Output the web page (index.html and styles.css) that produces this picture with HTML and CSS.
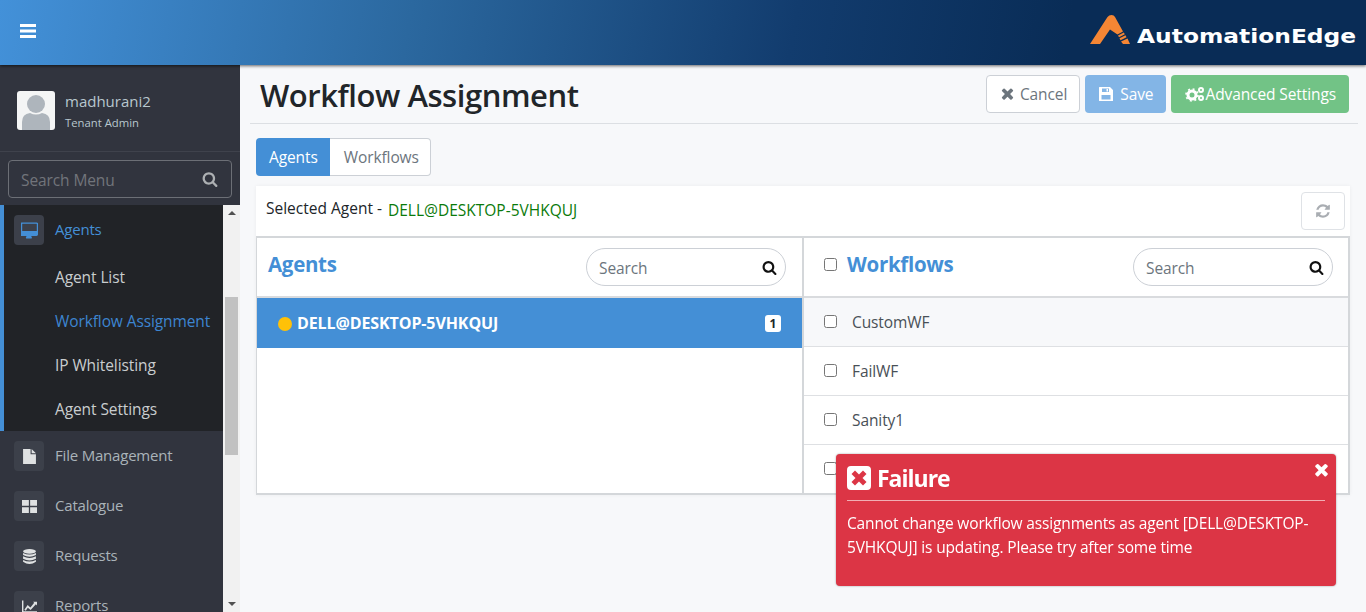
FILE: index.html
```html
<!DOCTYPE html>
<html lang="en">
<head>
  <meta charset="UTF-8" />
  <meta name="viewport" content="width=device-width, initial-scale=1.0"/>
  <title>Workflow Assignment</title>
  <link rel="stylesheet" href="styles.css">
</head>
<body>

<header class="topbar">
  <svg class="burger" viewBox="0 0 16 14"><path d="M0 0h16v3H0zM0 5.500h16v3H0zM0 11h16v3H0z"/></svg>
  <div class="brand">
    <svg class="brand-mark" viewBox="0 0 42 30"><path d="M0 30 L17.500 3 Q19 1 21.500 1 Q24 1 25 3 L33 17.500 L27.500 20.500 L20 15.500 L10 30Z M28 21.500 L33.800 18.500 L34.800 20.300 L29 23.300Z M29.500 24.300 L35.500 21.300 L36.500 23.300 L30.500 26.300Z M31 27.500 L37.500 24.500 L40 30 L33 30Z" fill="#f58634"/></svg>
    <span class="brand-name">AutomationEdge</span>
  </div>
</header>

<div class="layout">
  <aside class="sidebar">
    <div class="user-panel">
      <svg class="avatar" viewBox="0 0 38 39"><rect width="38" height="39" rx="3" fill="#f4f5f5"/><circle cx="19" cy="13" r="9" fill="#aeb5bc"/><path d="M5 39V31q0-8 8-9 6 3 12 0 8 1 8 9v8z" fill="#aeb5bc"/></svg>
      <div class="user-text">
        <div class="user-name">madhurani2</div>
        <div class="user-role">Tenant Admin</div>
      </div>
    </div>
    <div class="menu-search">
      <input type="text" placeholder="Search Menu" />
      <svg class="icon" viewBox="0 0 1792 1792"><path d="M1216 832q0-185-131.5-316.5t-316.5-131.5-316.5 131.5-131.5 316.5 131.5 316.5 316.5 131.5 316.5-131.5 131.5-316.5zm512 832q0 52-38 90t-90 38q-54 0-90-38l-343-342q-179 124-399 124-143 0-273.5-55.5t-225-150-150-225-55.5-273.5 55.5-273.5 150-225 225-150 273.5-55.5 273.5 55.5 225 150 150 225 55.5 273.5q0 220-124 399l343 343q37 37 37 90z"/></svg>
    </div>
    <div class="menu-wrap">
      <nav class="menu">
        <div class="menu-group">
          <div class="menu-item active">
            <span class="menu-icon"><svg viewBox="0 0 1792 1792"><path d="M1664 928v-704q0-13-9.500-22.500t-22.500-9.500h-1472q-13 0-22.500 9.500t-9.500 22.500v704q0 13 9.500 22.500t22.500 9.500h1472q13 0 22.500-9.500t9.500-22.500zm128-704v1088q0 66-47 113t-113 47h-544q0 37 16 77.500t32 71 16 43.500q0 26-19 45t-45 19h-512q-26 0-45-19t-19-45q0-14 16-44t32-70 16-78h-544q-66 0-113-47t-47-113v-1088q0-66 47-113t113-47h1632q66 0 113 47t47 113z"/></svg></span>
            Agents
          </div>
          <div class="sub-item">Agent List</div>
          <div class="sub-item current">Workflow Assignment</div>
          <div class="sub-item">IP Whitelisting</div>
          <div class="sub-item">Agent Settings</div>
        </div>
        <div class="menu-item">
          <span class="menu-icon"><svg viewBox="0 0 12 14"><path d="M0 0h7v5h5v9H0zM8 0l4 4H8z"/></svg></span>
          File Management
        </div>
        <div class="menu-item">
          <span class="menu-icon"><svg viewBox="0 0 14 12"><path d="M0 0h6.400v5.400H0zM7.600 0H14v5.400H7.600zM0 6.600h6.400V12H0zM7.600 6.600H14V12H7.600z"/></svg></span>
          Catalogue
        </div>
        <div class="menu-item">
          <span class="menu-icon"><svg viewBox="0 0 12 14"><ellipse cx="6" cy="2.200" rx="6" ry="2.200"/><path d="M0 3.700q6 3 12 0v2q-6 3-12 0zM0 6.800q6 3 12 0v2.400q-6 3-12 0zM0 10.200q6 3 12 0v1.600q-6 4.400-12 0z"/></svg></span>
          Requests
        </div>
        <div class="menu-item">
          <span class="menu-icon"><svg viewBox="0 0 16 13"><path d="M0 0h1.500v11.500H16V13H0z"/><path d="M2.500 10l3.500-5 3 2.500L13 2.500l-1.200-1H16v4l-1.200-1.300-5.600 6-3-2.500L4 11z"/></svg></span>
          Reports
        </div>
      </nav>
      <div class="scrollbar">
        <span class="arrow up"></span>
        <span class="thumb"></span>
        <span class="arrow down"></span>
      </div>
    </div>
  </aside>

  <main class="content">
    <div class="title-bar">
      <h1>Workflow Assignment</h1>
      <div class="actions">
        <button class="btn btn-cancel"><svg class="icon" viewBox="0 0 1792 1792"><path d="M1490 1322q0 40-28 68l-136 136q-28 28-68 28t-68-28l-294-294-294 294q-28 28-68 28t-68-28l-136-136q-28-28-28-68t28-68l294-294-294-294q-28-28-28-68t28-68l136-136q28-28 68-28t68 28l294 294 294-294q28-28 68-28t68 28l136 136q28 28 28 68t-28 68l-294 294 294 294q28 28 28 68z"/></svg>Cancel</button>
        <button class="btn btn-save"><svg class="icon" viewBox="0 0 16 16"><path fill-rule="evenodd" d="M1.500 1H12l3 3v10.500a.5.5 0 0 1-.5.5h-13a.5.5 0 0 1-.5-.5V1.500a.5.5 0 0 1 .5-.5zM4 2.500V6h7V2.500zM8.500 3H10v2.500H8.500zM3.500 9v4.500h9V9z"/></svg>Save</button>
        <button class="btn btn-advanced"><svg class="icon gears" viewBox="0 0 20 16"><circle cx="7" cy="9" r="4" fill="none" stroke="currentColor" stroke-width="3"/><circle cx="7" cy="9" r="6" fill="none" stroke="currentColor" stroke-width="1.600" stroke-dasharray="2 2.700"/><circle cx="16" cy="4" r="2" fill="none" stroke="currentColor" stroke-width="2"/><circle cx="16" cy="12" r="2" fill="none" stroke="currentColor" stroke-width="2"/></svg>Advanced Settings</button>
      </div>
    </div>

    <div class="tabs">
      <span class="tab tab-active">Agents</span>
      <span class="tab">Workflows</span>
    </div>

    <section class="panel">
      <div class="selected-row">
        <span class="selected-label">Selected Agent -</span>
        <span class="selected-value">DELL@DESKTOP-5VHKQUJ</span>
        <button class="refresh"><svg class="icon" viewBox="0 0 1792 1792"><path d="M1639 1056q0 5-1 7-64 268-268 434.500t-478 166.500q-146 0-282.500-55t-243.500-157l-129 129q-19 19-45 19t-45-19-19-45v-448q0-26 19-45t45-19h448q26 0 45 19t19 45-19 45l-137 137q71 66 161 102t187 36q134 0 250-65t186-179q11-17 53-117 8-23 30-23h192q13 0 22.500 9.500t9.500 22.500zm25-800v448q0 26-19 45t-45 19h-448q-26 0-45-19t-19-45 19-45l138-138q-148-137-349-137-134 0-250 65t-186 179q-11 17-53 117-8 23-30 23h-199q-13 0-22.500-9.500t-9.500-22.500v-7q65-268 270-434.500t480-166.500q146 0 284 55.500t245 156.500l130-129q19-19 45-19t45 19 19 45z"/></svg></button>
      </div>
      <div class="columns">
        <div class="column">
          <div class="col-head">
            <h3>Agents</h3>
            <div class="pill-search">
              <input type="text" placeholder="Search" />
              <svg class="icon" viewBox="0 0 1792 1792"><path d="M1216 832q0-185-131.5-316.5t-316.5-131.5-316.5 131.5-131.5 316.5 131.5 316.5 316.5 131.5 316.5-131.5 131.5-316.5zm512 832q0 52-38 90t-90 38q-54 0-90-38l-343-342q-179 124-399 124-143 0-273.5-55.5t-225-150-150-225-55.5-273.5 55.5-273.5 150-225 225-150 273.5-55.5 273.5 55.5 225 150 150 225 55.5 273.5q0 220-124 399l343 343q37 37 37 90z"/></svg>
            </div>
          </div>
          <div class="agent-row">
            <span class="dot"></span>
            <span class="agent-name">DELL@DESKTOP-5VHKQUJ</span>
            <span class="count">1</span>
          </div>
        </div>
        <div class="column">
          <div class="col-head">
            <input type="checkbox" class="check" />
            <h3>Workflows</h3>
            <div class="pill-search">
              <input type="text" placeholder="Search" />
              <svg class="icon" viewBox="0 0 1792 1792"><path d="M1216 832q0-185-131.5-316.5t-316.5-131.5-316.5 131.5-131.5 316.5 131.5 316.5 316.5 131.5 316.5-131.5 131.5-316.5zm512 832q0 52-38 90t-90 38q-54 0-90-38l-343-342q-179 124-399 124-143 0-273.5-55.5t-225-150-150-225-55.5-273.5 55.5-273.5 150-225 225-150 273.5-55.5 273.5 55.5 225 150 150 225 55.5 273.5q0 220-124 399l343 343q37 37 37 90z"/></svg>
            </div>
          </div>
          <label class="wf-row wf-first"><input type="checkbox" class="check" />CustomWF</label>
          <label class="wf-row"><input type="checkbox" class="check" />FailWF</label>
          <label class="wf-row"><input type="checkbox" class="check" />Sanity1</label>
          <label class="wf-row wf-last"><input type="checkbox" class="check" /></label>
        </div>
      </div>
    </section>
  </main>
</div>

<div class="toast">
  <svg class="toast-close" viewBox="0 0 1792 1792"><path d="M1490 1322q0 40-28 68l-136 136q-28 28-68 28t-68-28l-294-294-294 294q-28 28-68 28t-68-28l-136-136q-28-28-28-68t28-68l294-294-294-294q-28-28-28-68t28-68l136-136q28-28 68-28t68 28l294 294 294-294q28-28 68-28t68 28l136 136q28 28 28 68t-28 68l-294 294 294 294q28 28 28 68z"/></svg>
  <div class="toast-title">
    <svg viewBox="0 0 24 24"><path fill-rule="evenodd" d="M4 0h16a4 4 0 0 1 4 4v16a4 4 0 0 1-4 4H4a4 4 0 0 1-4-4V4a4 4 0 0 1 4-4zM8 4.500L4.500 8l4 4-4 4L8 19.500l4-4 4 4 3.500-3.500-4-4 4-4L16 4.500l-4 4z"/></svg>
    Failure
  </div>
  <p>Cannot change workflow assignments as agent [DELL@DESKTOP-5VHKQUJ] is updating. Please try after some time</p>
</div>

</body>
</html>
```

FILE: styles.css
```css
* {
  box-sizing: border-box;
}

html, body {
  height: 100%;
}

body {
  margin: 0;
  overflow: hidden;
  font-family: "Open Sans", "Noto Sans", Arial, sans-serif;
  font-size: 15.5px;
  letter-spacing: -0.1px;
  color: #212529;
  background-color: #f7f8fa;
  display: flex;
  flex-direction: column;
}

input, button {
  font-family: inherit;
  letter-spacing: inherit;
}

.icon {
  width: 16px;
  height: 16px;
  fill: currentColor;
  flex: none;
}

/* top bar */
.topbar {
  height: 65px;
  flex: none;
  display: flex;
  align-items: center;
  justify-content: space-between;
  padding: 0 10px 0 20px;
  background: linear-gradient(100deg, #4391d9 0%, #2b689f 30%, #123c6e 58%, #092c56 78%, #092c56 100%);
  box-shadow: 0 1px 3px rgba(0, 0, 0, 0.6);
  position: relative;
  z-index: 2;
}

.burger {
  width: 16px;
  height: 14px;
  fill: #fff;
  margin-top: -4px;
}

.brand {
  display: flex;
  align-items: flex-end;
  margin-top: -8px;
}

.brand-mark {
  width: 42px;
  height: 30px;
  margin-right: 5px;
}

.brand-name {
  font-family: "DejaVu Sans", sans-serif;
  font-size: 20px;
  font-weight: 700;
  line-height: 18px;
  letter-spacing: 0;
  color: #fff;
  transform: scaleX(1.168);
  transform-origin: left center;
  margin-right: 31px;
  margin-bottom: -1px;
}

.layout {
  flex: 1;
  min-height: 0;
  display: flex;
}

/* sidebar */
.sidebar {
  width: 240px;
  flex: none;
  display: flex;
  flex-direction: column;
  background-color: #31343e;
  color: #b8c7ce;
}

.user-panel {
  height: 87px;
  flex: none;
  display: flex;
  align-items: center;
  gap: 10px;
  padding: 4px 17px 0;
  border-bottom: 1px solid #3f424c;
}

.avatar {
  width: 38px;
  height: 39px;
}

.user-text {
  margin-top: 4px;
}

.user-name {
  font-size: 15px;
  line-height: 22px;
  letter-spacing: 0;
}

.user-role {
  font-size: 11.3px;
  line-height: 22px;
  letter-spacing: 0;
}

.menu-search {
  margin: 8px 8px 7px;
  height: 38px;
  flex: none;
  display: flex;
  align-items: center;
  padding: 0 13px 0 10px;
  border: 1px solid #6c6f76;
  border-radius: 4px;
  color: #adb0b3;
}

.menu-search input {
  flex: 1;
  min-width: 0;
  border: 0;
  outline: 0;
  padding-top: 3px;
  background: transparent;
  font-size: 15.5px;
  color: #fff;
}

.menu-search input::placeholder {
  color: #71747b;
}

.menu-wrap {
  flex: 1;
  min-height: 0;
  display: flex;
}

.menu {
  flex: 1;
  min-width: 0;
  overflow: hidden;
}

.menu-group {
  border-left: 4px solid #448fd6;
  background-color: #212327;
}

.menu-item {
  height: 50px;
  display: flex;
  align-items: center;
  gap: 11px;
  padding-left: 14px;
  padding-bottom: 2px;
  font-size: 15px;
  letter-spacing: -0.2px;
  line-height: 20px;
  color: #aab3b9;
}

.menu-group .menu-item {
  padding-left: 10px;
}

.menu-item.active {
  color: #448fd6;
}

.menu-icon {
  width: 30px;
  height: 30px;
  flex: none;
  margin-top: 2px;
  display: flex;
  align-items: center;
  justify-content: center;
  border-radius: 4px;
  background-color: #3c404a;
  color: #dfe1e2;
}

.menu-icon svg {
  width: 15px;
  height: 15px;
  fill: currentColor;
}

.menu-item.active .menu-icon svg {
  width: 17px;
  height: 17px;
}

.menu-item.active .menu-icon {
  color: #448fd6;
}

.sub-item {
  height: 44px;
  display: flex;
  align-items: center;
  padding-left: 51px;
  color: #c9cdcf;
}

.sub-item.current {
  color: #3d85d1;
}

.scrollbar {
  width: 17px;
  flex: none;
  display: flex;
  flex-direction: column;
  align-items: center;
  background-color: #f1f1f1;
}

.thumb {
  width: 13px;
  height: 158px;
  margin-top: 76px;
  margin-bottom: auto;
  background-color: #c1c1c1;
}

.arrow {
  width: 0;
  height: 0;
  margin: 6px 0;
  border-left: 4px solid transparent;
  border-right: 4px solid transparent;
}

.arrow.up {
  border-bottom: 4px solid #505050;
}

.arrow.down {
  border-top: 4px solid #505050;
}

/* main */
.content {
  flex: 1;
  min-width: 0;
  padding: 3px 16px 0;
}

.title-bar {
  height: 56px;
  margin: 0 -8px 0 -6px;
  display: flex;
  align-items: center;
  justify-content: space-between;
  padding: 0 9px 2px 10px;
  border-bottom: 1px solid #dcdfe3;
}

h1 {
  margin: 0;
  font-size: 31px;
  font-weight: 600;
  letter-spacing: -0.45px;
  color: #212529;
}

.actions {
  display: flex;
  gap: 5px;
  margin-top: -2px;
}

.btn {
  height: 38px;
  display: flex;
  align-items: center;
  padding: 0 12px;
  border: 1px solid transparent;
  border-radius: 4px;
  font-size: 15.5px;
  color: #fff;
}

.btn-cancel {
  background-color: #fff;
  border-color: #ccd0d6;
  color: #6c757d;
}

.btn-cancel .icon {
  width: 17px;
  height: 17px;
  margin-right: 4px;
}

.btn-save {
  background-color: #83b5e6;
  padding: 0 12px;
}

.btn-save .icon {
  margin-right: 6px;
}

.btn-advanced {
  background-color: #72c386;
  padding: 0 12px 0 13px;
}

.gears {
  width: 20px;
}

.tabs {
  display: flex;
  width: max-content;
  margin: 14px 0 10px;
  border-radius: 4px;
}

.tab {
  height: 38px;
  display: flex;
  align-items: center;
  padding: 0 11px 0 14px;
  border: 1px solid #ccd0d6;
  border-left: 0;
  border-radius: 0 4px 4px 0;
  background-color: #fff;
  color: #6c757d;
}

.tab-active {
  padding: 0 12px 0 13px;
  border: 0;
  border-radius: 4px 0 0 4px;
  background-color: #448fd6;
  color: #fff;
}

.panel {
  background-color: #fff;
  box-shadow: 0 0 4px rgba(0, 0, 0, 0.05);
}

.selected-row {
  height: 50px;
  display: flex;
  align-items: center;
  padding: 0 5px 0 10px;
  letter-spacing: 0;
}

.selected-label {
  margin-top: -7px;
  color: #212529;
}

.selected-value {
  color: #0a7a0a;
  margin-left: 6px;
  margin-top: -2px;
}

.refresh {
  width: 44px;
  height: 38px;
  margin-left: auto;
  display: flex;
  align-items: center;
  justify-content: center;
  border: 1px solid #dfe2e6;
  border-radius: 4px;
  background-color: #fff;
  color: #a9adb2;
}

.columns {
  display: grid;
  grid-template-columns: 545px 1fr;
  height: 259px;
  border: 2px solid #d4d7da;
  border-left-width: 1px;
  overflow: hidden;
}

.column + .column {
  border-left: 2px solid #d4d7da;
}

.col-head {
  height: 60px;
  display: flex;
  align-items: flex-start;
  padding: 11px 16px 0 11px;
  border-bottom: 2px solid #d9dbde;
}

.column + .column .col-head {
  padding: 11px 15px 0 20px;
}

h3 {
  margin: 0;
  font-size: 20.5px;
  line-height: 30px;
  font-weight: 700;
  letter-spacing: -0.3px;
  color: #448fd6;
}

.check {
  width: 13px;
  height: 13px;
  margin: 0;
  flex: none;
}

.col-head .check {
  margin: 9px 10px 0 0;
}

.pill-search {
  width: 200px;
  height: 38px;
  margin: -1px 0 0 auto;
  display: flex;
  align-items: center;
  padding: 0 8px 0 10px;
  border: 1px solid #ccd0d6;
  border-radius: 19px;
  background-color: #fff;
  color: #111;
}

.pill-search input {
  flex: 1;
  min-width: 0;
  border: 0;
  outline: 0;
  padding-top: 3px;
  background: transparent;
  font-size: 15.5px;
  color: #495057;
}

.pill-search input::placeholder {
  color: #6c757d;
}

.pill-search .icon {
  width: 15px;
  height: 15px;
}

.agent-row {
  height: 50px;
  display: flex;
  align-items: center;
  padding: 0 21px;
  background-color: #448fd6;
  color: #fff;
  font-size: 16px;
  font-weight: 700;
}

.dot {
  width: 14px;
  height: 14px;
  margin: 2px 5px 0 0;
  border-radius: 50%;
  background-color: #ffc107;
}

.count {
  margin-left: auto;
  width: 16px;
  height: 17px;
  line-height: 17px;
  text-align: center;
  border-radius: 3px;
  background-color: #fff;
  color: #212529;
  font-size: 12px;
}

.wf-row {
  height: 49px;
  display: flex;
  align-items: center;
  gap: 15px;
  padding-left: 20px;
  border-bottom: 1px solid #dee0e3;
  color: #495057;
}

.wf-row .check {
  margin-top: -2px;
}

.wf-first {
  background-color: #f7f8fa;
}

.wf-last {
  border-bottom: 0;
}

/* toast */
.toast {
  position: fixed;
  left: 836px;
  top: 454px;
  width: 500px;
  height: 132px;
  padding: 8px 11px;
  border-radius: 4px;
  background-color: #dc3545;
  color: #fff;
  box-shadow: 0 0 2px rgba(0, 0, 0, 0.4);
}

.toast-close {
  position: absolute;
  right: 5px;
  top: 6px;
  width: 19px;
  height: 19px;
  fill: #fff;
}

.toast-title {
  display: flex;
  align-items: center;
  gap: 6px;
  height: 39px;
  padding-bottom: 7px;
  font-size: 23px;
  font-weight: 700;
  letter-spacing: -1px;
  border-bottom: 1px solid rgba(255, 255, 255, 0.6);
}

.toast-title svg {
  width: 24px;
  height: 24px;
  fill: #fff;
}

.toast p {
  margin: 10px 0 0;
  font-size: 15.5px;
  line-height: 24px;
  letter-spacing: -0.15px;
}
```
